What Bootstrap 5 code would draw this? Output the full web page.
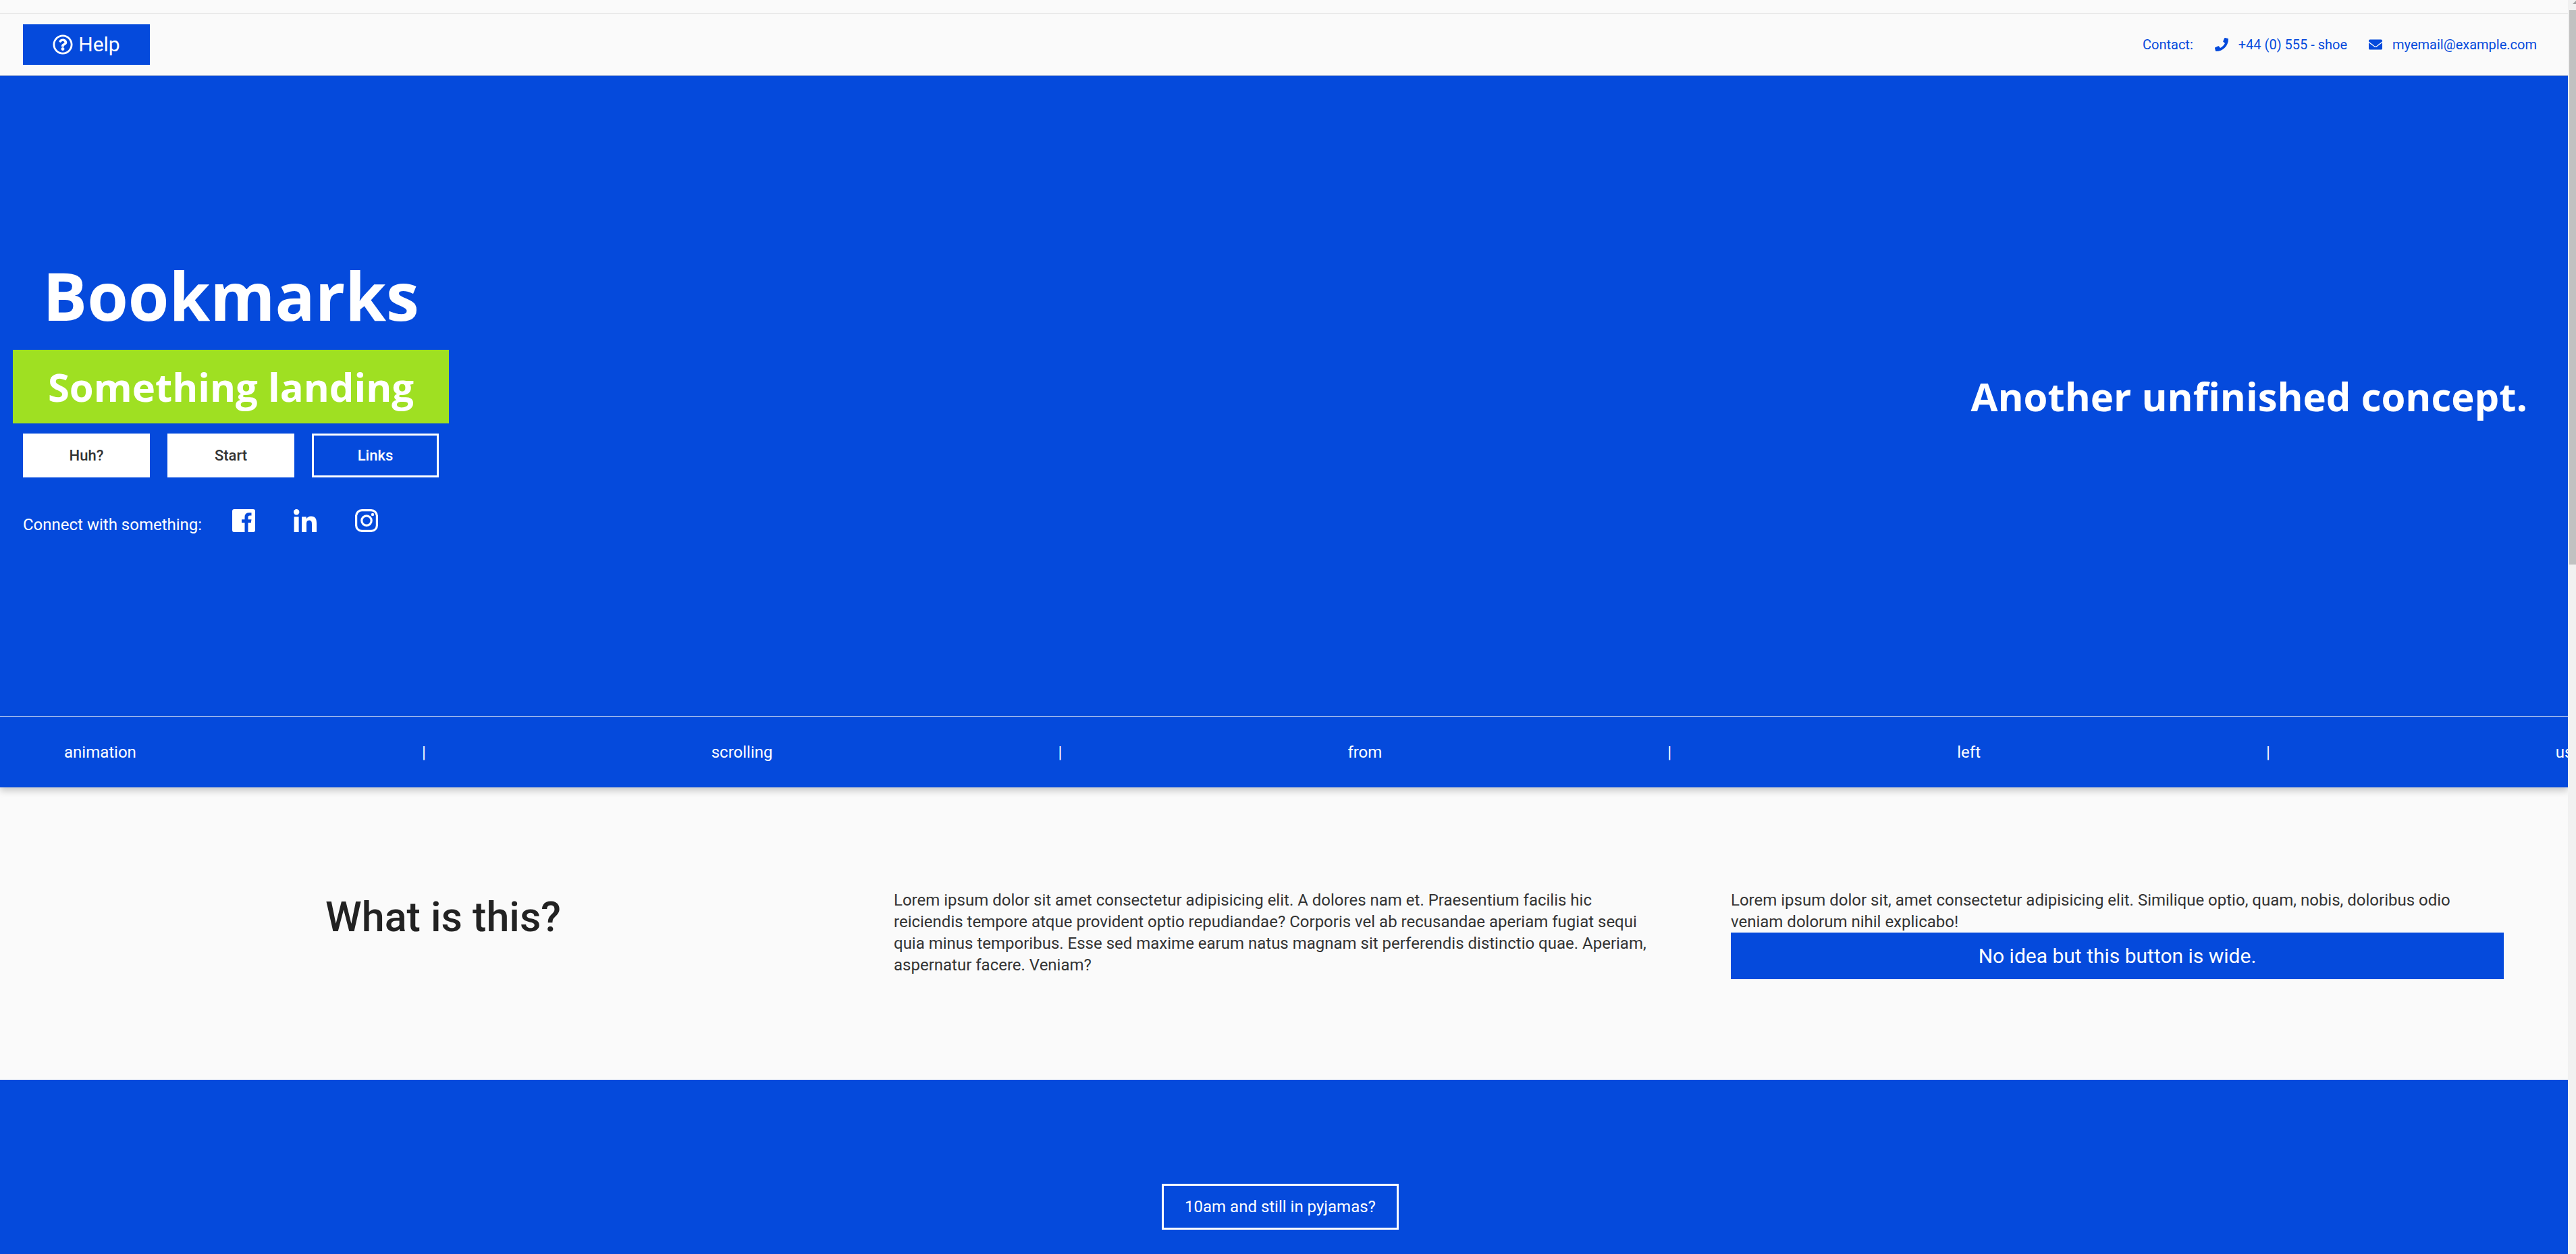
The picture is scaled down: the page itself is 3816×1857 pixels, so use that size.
<!DOCTYPE html>
<html lang="en">
<head>
<meta charset="utf-8">
<meta name="viewport" content="width=device-width, initial-scale=1">
<title>Bookmarks</title>
<link href="https://cdn.jsdelivr.net/npm/bootstrap@5.3.0/dist/css/bootstrap.min.css" rel="stylesheet">
<style>
  :root { --brand: #054adc; --lime: #9fe022; --paper: #fafafa; --rule: #d9d9d9; }
  body { font-family: Roboto, "Liberation Sans", sans-serif; font-size: 24px; line-height: 32px; color: #333; background: var(--paper); padding-right: 12px; overflow: hidden; }
  h1, h2 { font-family: "Open Sans", "Noto Sans", sans-serif; margin: 0; }
  .btn { --bs-btn-border-radius: 0; --bs-btn-border-width: 3px; --bs-btn-padding-y: 0; --bs-btn-line-height: 32px; display: inline-flex; align-items: center; justify-content: center; }
  .btn-brand { --bs-btn-color: #fff; --bs-btn-bg: var(--brand); --bs-btn-border-color: var(--brand); --bs-btn-hover-color: #fff; --bs-btn-hover-bg: #043fbb; --bs-btn-font-size: 30px; }
  .btn-help { width: 188px; height: 60px; gap: 8px; }
  .btn-hero { width: 188px; height: 65px; --bs-btn-font-size: 22px; --bs-btn-font-weight: 500; }
  .btn-white { --bs-btn-color: #333; --bs-btn-bg: #fff; --bs-btn-border-color: #fff; }
  .btn-outline-light { --bs-btn-color: #fff; --bs-btn-border-color: #fff; }
  .btn-wide { height: 69px; }
  .btn-cta { height: 68px; padding: 0 31px; --bs-btn-font-size: 24px; }
  .bg-brand { background: var(--brand); }
  .top-strip { height: 21px; border-bottom: 1px solid var(--rule); }
  .topbar { height: 91px; padding: 0 46px 0 34px; border-bottom: 1px solid var(--rule); }
  .contact-list { gap: 32px; font-size: 20px; color: var(--brand); }
  .contact-list a { gap: 15px; color: inherit; }
  .hero { height: 949px; padding: 0 60px 0 19px; }
  .hero-title { font-size: 98px; line-height: 130px; font-weight: 700; }
  .hero-tag { font-size: 58px; line-height: 109px; font-weight: 700; background: var(--lime); margin-top: 16px; }
  .hero-side { font-size: 58px; line-height: 80px; font-weight: 700; }
  .hero-buttons { gap: 26px; padding: 15px 15px 0; }
  .social { padding: 47px 15px 8px; }
  .social-icons { gap: 57px; margin-left: 45px; padding-bottom: 5px; }
  .social-icons a { color: inherit; }
  .ticker { height: 105px; padding-left: 95px; gap: 423px; border-top: 1px solid #fff; }
  .ticker-wrap { box-shadow: 0 5px 10px rgba(0, 0, 0, .2); }
  .about { padding: 151px 95px 149px 84px; gap: 95px; }
  .about-col { flex: 1 1 0; }
  .about-col p { padding-right: 8px; }
  .about-title { font-family: Roboto, sans-serif; font-size: 61px; line-height: 82px; font-weight: 500; color: #222; }
  .cta { padding: 154px 11px 36px 0; }
  .scroll-rail { width: 12px; background: #f1f1f1; z-index: 5; padding-left: 2px; }
  .scroll-rail svg { height: 15px; }
  .scroll-thumb { height: 44.2vh; background: #c1c1c1; }
</style>
<script src="https://cdn.jsdelivr.net/npm/bootstrap@5.3.0/dist/js/bootstrap.bundle.min.js"></script>
</head>
<body class="min-vh-100 d-flex flex-column">

<div class="top-strip"></div>
<header class="topbar d-flex align-items-center justify-content-between">
  <button type="button" class="btn btn-brand btn-help">
    <svg width="30" height="30" viewBox="0 0 512 512" fill="currentColor" aria-hidden="true"><path d="M256 8C119.043 8 8 119.083 8 256c0 136.997 111.043 248 248 248s248-111.003 248-248C504 119.083 392.957 8 256 8zm0 448c-110.532 0-200-89.431-200-200 0-110.495 89.472-200 200-200 110.491 0 200 89.471 200 200 0 110.53-89.431 200-200 200zm107.244-255.2c0 67.052-72.421 68.084-72.421 92.863V300c0 6.627-5.373 12-12 12h-45.647c-6.627 0-12-5.373-12-12v-8.659c0-35.745 27.1-50.034 47.579-61.516 17.561-9.845 28.324-16.541 28.324-29.579 0-17.246-21.999-28.693-39.784-28.693-23.189 0-33.894 10.977-48.942 29.969-4.057 5.12-11.46 6.071-16.666 2.124l-27.824-21.098c-5.107-3.872-6.251-11.066-2.644-16.363C184.846 131.491 214.94 112 261.794 112c49.071 0 101.45 38.304 101.45 88.8zM298 368c0 23.159-18.841 42-42 42s-42-18.841-42-42 18.841-42 42-42 42 18.841 42 42z"/></svg>
    Help
  </button>
  <div class="contact-list d-flex align-items-center">
    <span>Contact:</span>
    <a href="#" class="d-flex align-items-center text-decoration-none">
      <svg width="20" height="20" viewBox="0 0 512 512" fill="currentColor" aria-hidden="true"><path d="M493.4 24.6l-104-24c-11.3-2.6-22.9 3.3-27.5 13.9l-48 112c-4.2 9.8-1.4 21.3 6.9 28l60.6 49.6c-36 76.7-98.9 140.5-177.2 177.2l-49.6-60.6c-6.8-8.3-18.2-11.1-28-6.9l-112 48C3.9 366.5-2 378.1.6 389.4l24 104C27.1 504.2 36.7 512 48 512c256.1 0 464-207.5 464-464 0-11.2-7.7-20.9-18.6-23.4z"/></svg>
      +44 (0) 555 - shoe
    </a>
    <a href="#" class="d-flex align-items-center text-decoration-none">
      <svg width="20" height="20" viewBox="0 0 512 512" fill="currentColor" aria-hidden="true"><path d="M502.3 190.8c3.9-3.1 9.7-.2 9.7 4.7V400c0 26.5-21.5 48-48 48H48c-26.5 0-48-21.5-48-48V195.6c0-5 5.7-7.8 9.7-4.7 22.4 17.4 52.1 39.5 154.1 113.6 21.1 15.4 56.7 47.8 92.2 47.6 35.7.3 72-32.8 92.3-47.6 102-74.1 131.6-96.3 154-113.7zM256 320c23.2.4 56.6-29.2 73.4-41.4 132.7-96.3 142.8-104.7 173.4-128.7 5.8-4.5 9.2-11.5 9.2-18.9v-19c0-26.5-21.5-48-48-48H48c-26.5 0-48 21.5-48 48v19c0 7.4 3.4 14.3 9.2 18.9 30.6 23.9 40.7 32.4 173.4 128.7 16.8 12.2 50.2 41.8 73.4 41.4z"/></svg>
      myemail@example.com
    </a>
  </div>
</header>

<main class="d-flex flex-column flex-grow-1">
  <section class="hero bg-brand text-white d-flex align-items-center justify-content-between">
    <div>
      <h1 class="hero-title text-center">Bookmarks</h1>
      <h2 class="hero-tag text-center">Something landing</h2>
      <div class="hero-buttons d-flex">
        <button type="button" class="btn btn-white btn-hero">Huh?</button>
        <button type="button" class="btn btn-white btn-hero">Start</button>
        <button type="button" class="btn btn-outline-light btn-hero">Links</button>
      </div>
      <div class="social d-flex align-items-end">
        <span>Connect with something:</span>
        <div class="social-icons d-flex">
          <a href="#" class="d-flex" aria-label="Facebook"><svg width="34" height="34" viewBox="0 0 34 34" fill="currentColor"><path d="M3 0h28a3 3 0 0 1 3 3v28a3 3 0 0 1-3 3h-7.500V20h4.300l.7-4.700h-5v-3.300c0-1.500.7-2.500 2.600-2.500h2.400V5.200h-3.500c-4.200 0-6.500 2.300-6.500 6.300v3.800H14V20h4.500v14H3a3 3 0 0 1-3-3V3a3 3 0 0 1 3-3z"/></svg></a>
          <a href="#" class="d-flex" aria-label="LinkedIn"><svg width="34" height="34" viewBox="0 0 34 34" fill="currentColor"><circle cx="4.200" cy="4.200" r="4.200"/><path d="M.6 11.300h7V34h-7zM12 11.300h6.800v3.100c1-1.900 3.500-3.800 7-3.800C32.600 10.600 34 15 34 21v13h-7V22.600c0-2.800-.2-6-3.900-6S19 19.600 19 22.400V34h-7z"/></svg></a>
          <a href="#" class="d-flex" aria-label="Instagram"><svg width="34" height="34" viewBox="0 0 34 34" fill="none" stroke="currentColor"><rect x="1.600" y="1.600" width="30.800" height="30.800" rx="8.500" stroke-width="3.200"/><circle cx="17" cy="17" r="7.200" stroke-width="3.200"/><circle cx="26" cy="8" r="2.200" fill="currentColor" stroke="none"/></svg></a>
        </div>
      </div>
    </div>
    <h2 class="hero-side">Another unfinished concept.</h2>
  </section>

  <div class="ticker-wrap position-relative bg-brand text-white">
    <div class="ticker d-flex align-items-center overflow-hidden text-nowrap">
      <span>animation</span><span>|</span>
      <span>scrolling</span><span>|</span>
      <span>from</span><span>|</span>
      <span>left</span><span>|</span>
      <span>using</span>
    </div>
  </div>

  <section class="about d-flex align-items-start">
    <div class="about-col"><h2 class="about-title text-center">What is this?</h2></div>
    <div class="about-col">
      <p class="m-0">Lorem ipsum dolor sit amet consectetur adipisicing elit. A dolores nam et. Praesentium facilis hic reiciendis tempore atque provident optio repudiandae? Corporis vel ab recusandae aperiam fugiat sequi quia minus temporibus. Esse sed maxime earum natus magnam sit perferendis distinctio quae. Aperiam, aspernatur facere. Veniam?</p>
    </div>
    <div class="about-col">
      <p class="m-0">Lorem ipsum dolor sit, amet consectetur adipisicing elit. Similique optio, quam, nobis, doloribus odio veniam dolorum nihil explicabo!</p>
      <button type="button" class="btn btn-brand btn-wide w-100">No idea but this button is wide.</button>
    </div>
  </section>

  <section class="cta bg-brand flex-grow-1 text-center">
    <button type="button" class="btn btn-outline-light btn-cta">10am and still in pyjamas?</button>
  </section>
</main>

<div class="scroll-rail position-fixed top-0 end-0 bottom-0 overflow-hidden d-flex flex-column" aria-hidden="true">
  <svg class="flex-shrink-0" width="10" viewBox="0 0 10 15"><path d="M5 6 10 1V6z" fill="#a3a3a3"/></svg>
  <div class="scroll-thumb"></div>
</div>
</body>
</html>
